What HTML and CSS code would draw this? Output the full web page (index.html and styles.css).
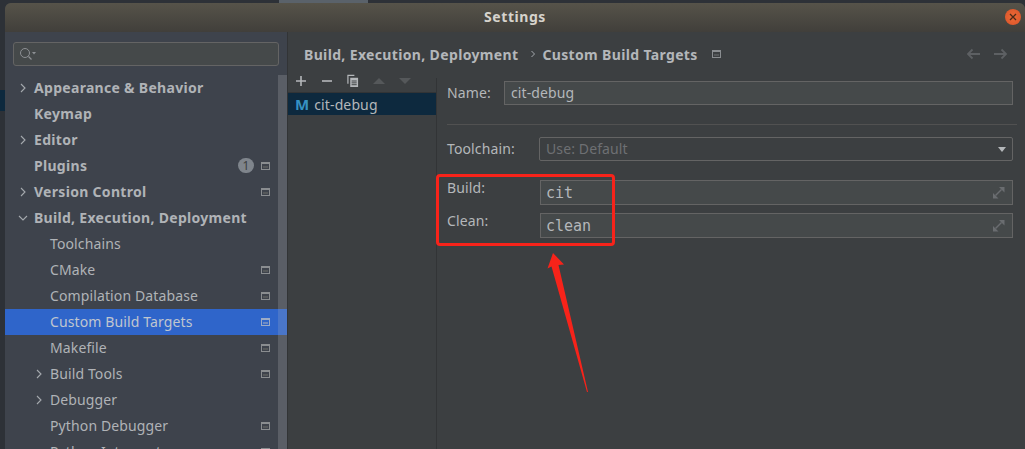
FILE: index.html
```html
<!DOCTYPE html>
<html lang="en">
<head>
    <meta charset="UTF-8">
    <title>Settings</title>
    <link rel="stylesheet" href="styles.css">
</head>
<body>
<div class="behind-tab"></div>
<div class="behind-row"></div>
<section class="window">
    <header class="titlebar">
        <span class="title">Settings</span>
        <span class="close">
            <svg width="10" height="10" viewBox="0 0 10 10"><path d="M2 2l6 6M8 2l-6 6" stroke="#4a2a18" stroke-width="1.3" fill="none"/></svg>
        </span>
    </header>
    <div class="main">
        <aside class="sidebar">
            <div class="search">
                <svg width="18" height="14" viewBox="0 0 18 14"><circle cx="6" cy="6" r="4.5" stroke="#8d9094" fill="none"/><path d="M9.5 9.5l3 3" stroke="#8d9094" stroke-width="1.2"/><path d="M13 5h4l-2 2.5z" fill="#8d9094"/></svg>
            </div>
            <div class="tree-wrap">
                <ul class="tree">
                    <li class="row top"><svg class="chev" viewBox="0 0 8 10"><path d="M2 1l4 4-4 4" fill="none" stroke="#a5a9ae" stroke-width="1.1"/></svg>Appearance &amp; Behavior</li>
                    <li class="row top">Keymap</li>
                    <li class="row top"><svg class="chev" viewBox="0 0 8 10"><path d="M2 1l4 4-4 4" fill="none" stroke="#a5a9ae" stroke-width="1.1"/></svg>Editor</li>
                    <li class="row top">Plugins<span class="badge">1</span><i class="proj"></i></li>
                    <li class="row top"><svg class="chev" viewBox="0 0 8 10"><path d="M2 1l4 4-4 4" fill="none" stroke="#a5a9ae" stroke-width="1.1"/></svg>Version Control<i class="proj"></i></li>
                    <li class="row top"><svg class="chev" viewBox="0 0 10 8"><path d="M1 2l4 4 4-4" fill="none" stroke="#a5a9ae" stroke-width="1.1"/></svg>Build, Execution, Deployment</li>
                    <li class="row sub">Toolchains</li>
                    <li class="row sub">CMake<i class="proj"></i></li>
                    <li class="row sub">Compilation Database<i class="proj"></i></li>
                    <li class="row sub selected">Custom Build Targets<i class="proj"></i></li>
                    <li class="row sub">Makefile<i class="proj"></i></li>
                    <li class="row sub"><svg class="chev" viewBox="0 0 8 10"><path d="M2 1l4 4-4 4" fill="none" stroke="#a5a9ae" stroke-width="1.1"/></svg>Build Tools<i class="proj"></i></li>
                    <li class="row sub"><svg class="chev" viewBox="0 0 8 10"><path d="M2 1l4 4-4 4" fill="none" stroke="#a5a9ae" stroke-width="1.1"/></svg>Debugger</li>
                    <li class="row sub">Python Debugger<i class="proj"></i></li>
                    <li class="row sub last">Python Interpreter<i class="proj"></i></li>
                </ul>
                <div class="scrollbar"></div>
            </div>
        </aside>
        <div class="content">
            <div class="crumbs">
                <b>Build, Execution, Deployment</b>
                <svg class="crumb-sep" width="6" height="8" viewBox="0 0 6 8"><path d="M1.5 1l3 3-3 3" fill="none" stroke="#a5a9ae"/></svg>
                <b>Custom Build Targets</b>
                <i class="proj"></i>
                <span class="nav">
                    <svg width="15" height="12" viewBox="0 0 15 12"><path d="M14 6H2M6.500 1.500L2 6l4.500 4.500" fill="none" stroke="#5d6063" stroke-width="1.800"/></svg>
                    <svg width="15" height="12" viewBox="0 0 15 12"><path d="M1 6h12M8.500 1.500L13 6l-4.500 4.500" fill="none" stroke="#5d6063" stroke-width="1.800"/></svg>
                </span>
            </div>
            <div class="panes">
                <div class="targets">
                    <div class="toolbar">
                        <svg width="12" height="12" viewBox="0 0 12 12"><path d="M6 1v10M1 6h10" stroke="#b4b7ba" stroke-width="1.600"/></svg>
                        <svg width="12" height="12" viewBox="0 0 12 12"><path d="M1 6h10" stroke="#b4b7ba" stroke-width="1.600"/></svg>
                        <svg width="12" height="14" viewBox="0 0 13 14"><path d="M1 10V1h7" fill="none" stroke="#b4b7ba" stroke-width="1.300"/><path d="M3.500 3.500h8.500v10H3.500z" fill="#b4b7ba"/><path d="M5 7h5.500M5 9h5.500M5 11h5.500" stroke="#3c3f41"/></svg>
                        <svg width="12" height="8" viewBox="0 0 12 8"><path d="M0 7l6-6 6 6z" fill="#55585a"/></svg>
                        <svg width="12" height="8" viewBox="0 0 12 8"><path d="M0 1l6 6 6-6z" fill="#55585a"/></svg>
                    </div>
                    <div class="target-row"><b class="m">M</b>cit-debug</div>
                </div>
                <form class="form">
                    <div class="name-row">
                        <label>Name:</label>
                        <div class="field name-field">cit-debug</div>
                    </div>
                    <hr class="sep">
                    <div class="tool-row">
                        <label>Toolchain:</label>
                        <div class="combo">Use: Default<span class="arrow"></span></div>
                    </div>
                    <div class="cmd-row first">
                        <label>Build:</label>
                        <div class="field cmd">cit<svg class="expand" width="13" height="13" viewBox="0 0 13 13"><path d="M7 1h5.500v5.500zM1 7v5.500h5.500z" fill="#6a6d70"/><path d="M3.500 9.500l6-6" stroke="#6a6d70" stroke-width="1.400"/></svg></div>
                    </div>
                    <div class="cmd-row">
                        <label>Clean:</label>
                        <div class="field cmd">clean<svg class="expand" width="13" height="13" viewBox="0 0 13 13"><path d="M7 1h5.500v5.500zM1 7v5.500h5.500z" fill="#6a6d70"/><path d="M3.500 9.500l6-6" stroke="#6a6d70" stroke-width="1.400"/></svg></div>
                    </div>
                </form>
            </div>
        </div>
    </div>
</section>
<div class="note-box"></div>
<svg class="note-arrow" width="60" height="150" viewBox="540 250 60 150"><path d="M553 253L564 264.500L558.500 265L588 392L587 392L551.500 266.500L547.500 268.500Z" fill="#f7231a"/></svg>
</body>
</html>
```

FILE: styles.css
```css
html, body {
    margin: 0;
    height: 449px;
    overflow: hidden;
}

body {
    position: relative;
    background-color: #2d3137;
    font-family: "Noto Sans", sans-serif;
    font-size: 14px;
    letter-spacing: .12px;
    color: #b4b7ba;
    padding: 3px 0 0 5px;
    box-sizing: border-box;
}

.behind-tab {
    position: absolute;
    left: 279px;
    top: 0;
    width: 89px;
    height: 3px;
    background-color: #5a626a;
}

.behind-row {
    position: absolute;
    left: 0;
    top: 90px;
    width: 5px;
    height: 21px;
    background-color: #0d293e;
}

.window {
    position: relative;
    display: flex;
    flex-direction: column;
    height: 460px;
    background-color: #3c3f41;
    border-radius: 6px 6px 0 0;
}

.titlebar {
    position: relative;
    flex: none;
    height: 27px;
    padding-bottom: 2px;
    display: flex;
    align-items: center;
    justify-content: center;
    background: linear-gradient(#565349, #413f3b);
    border-radius: 6px 6px 0 0;
}

.title {
    font-weight: 700;
    color: #d6d3cc;
    font-size: 14px;
    letter-spacing: .55px;
}

.close {
    position: absolute;
    right: 4px;
    top: 6px;
    width: 16px;
    height: 16px;
    border-radius: 50%;
    background: radial-gradient(#ee6a35, #d9532a);
    display: flex;
    align-items: center;
    justify-content: center;
}

.main {
    flex: 1;
    display: flex;
    min-height: 0;
}

.sidebar {
    flex: none;
    width: 282px;
    background-color: #3e434c;
    box-sizing: border-box;
    padding-top: 10px;
}

.search {
    height: 22px;
    margin: 0 8px;
    background-color: #45494a;
    border: 1px solid #646464;
    border-radius: 3px;
    display: flex;
    align-items: center;
    padding-left: 5px;
}

.tree-wrap {
    display: flex;
    margin-top: 9px;
}

.tree {
    flex: 1;
    list-style: none;
    margin: 0;
    padding: 0;
}

.row {
    position: relative;
    height: 26px;
    line-height: 26px;
    white-space: nowrap;
    color: #b0b3b7;
}

.top {
    font-weight: 700;
    padding-left: 29px;
    letter-spacing: .3px;
}

.sub {
    padding-left: 45px;
}

.last {
    height: 10px;
}

.chev {
    position: absolute;
    width: 10px;
    height: 10px;
    top: 8px;
    left: 13px;
}

.sub .chev {
    left: 29px;
}

.selected {
    background-color: #2f65ca;
    margin-right: -9px;
    color: #c0c6cf;
}

.selected::after {
    content: "";
    position: absolute;
    right: 0;
    top: 0;
    width: 9px;
    height: 100%;
    background-color: #4a76c9;
}

.proj {
    position: absolute;
    right: 8px;
    top: 9px;
    width: 9px;
    height: 8px;
    border: 1px solid #8a8d90;
    box-sizing: border-box;
    border-top-width: 2px;
    background: linear-gradient(#55585a, #55585a) center / 5px 2px no-repeat;
}

.selected .proj {
    right: 17px;
    border-color: #9dabc6;
    background-image: linear-gradient(#6f8bc4, #6f8bc4);
}

.badge {
    position: absolute;
    right: 24px;
    top: 5px;
    width: 16px;
    height: 15px;
    border-radius: 8px;
    background-color: #7f858c;
    color: #3c3f41;
    font-size: 12px;
    font-weight: 400;
    line-height: 15px;
    text-align: center;
}

.scrollbar {
    flex: none;
    width: 9px;
    background-color: #5a5e66;
}

.content {
    flex: 1;
    display: flex;
    flex-direction: column;
    min-width: 0;
    border-left: 1px solid #323436;
}

.crumbs {
    display: flex;
    align-items: center;
    gap: 10px;
    height: 44px;
    padding: 0 17px 2px 16px;
    position: relative;
}

.crumbs b {
    font-size: 14px;
    letter-spacing: .35px;
    color: #b4b7ba;
}

.crumb-sep {
    margin: 0 -4px 0 2px;
}

.crumbs .proj {
    position: static;
    margin-left: 4px;
}

.nav {
    margin-left: auto;
    display: flex;
    gap: 12px;
}

.panes {
    flex: 1;
    display: flex;
}

.targets {
    flex: none;
    width: 148px;
    border-right: 1px solid #323436;
}

.toolbar {
    height: 23px;
    display: flex;
    align-items: center;
    gap: 14px;
    padding-left: 7px;
    margin-top: -9px;
    border-bottom: 1px solid #323436;
}

.target-row {
    height: 22px;
    line-height: 22px;
    background-color: #0d293e;
    padding-left: 7px;
    color: #b4b7ba;
}

.m {
    color: #3592c4;
    font-size: 15px;
    margin-right: 5px;
}

.form {
    flex: 1;
    padding: 3px 12px 0 10px;
    min-width: 0;
}

.name-row, .tool-row, .cmd-row {
    display: flex;
}

label {
    flex: none;
}

.name-row label {
    width: 57px;
    line-height: 24px;
}

.field {
    box-sizing: border-box;
    background-color: #45494a;
    border: 1px solid #646464;
    color: #b4b7ba;
}

.name-field {
    flex: 1;
    height: 24px;
    line-height: 22px;
    padding-left: 6px;
}

.sep {
    border: 0;
    border-top: 1px solid #515151;
    margin: 19px -4px 12px 0;
}

.tool-row label {
    width: 92px;
    line-height: 24px;
}

.combo {
    flex: 1;
    position: relative;
    height: 24px;
    box-sizing: border-box;
    border: 1px solid #646464;
    border-radius: 2px;
    line-height: 22px;
    padding-left: 6px;
    color: #6e7073;
}

.arrow {
    position: absolute;
    right: 6px;
    top: 9px;
    border: 4px solid transparent;
    border-top: 5px solid #b4b7ba;
    border-left-width: 4.500px;
    border-right-width: 4.500px;
}

.cmd-row {
    margin-top: 8px;
}

.cmd-row.first {
    margin-top: 19px;
}

.cmd-row label {
    width: 93px;
    line-height: 16px;
}

.cmd {
    flex: 1;
    position: relative;
    height: 25px;
    line-height: 24px;
    padding-left: 5px;
    font-family: "DejaVu Sans Mono", monospace;
    font-size: 15px;
    letter-spacing: 0;
}

.expand {
    position: absolute;
    right: 7px;
    top: 5px;
}

.note-box {
    position: absolute;
    left: 436px;
    top: 174px;
    width: 179px;
    height: 72px;
    box-sizing: border-box;
    border: 3px solid #f7231a;
    border-radius: 4px;
}

.note-arrow {
    position: absolute;
    left: 540px;
    top: 250px;
}
```
